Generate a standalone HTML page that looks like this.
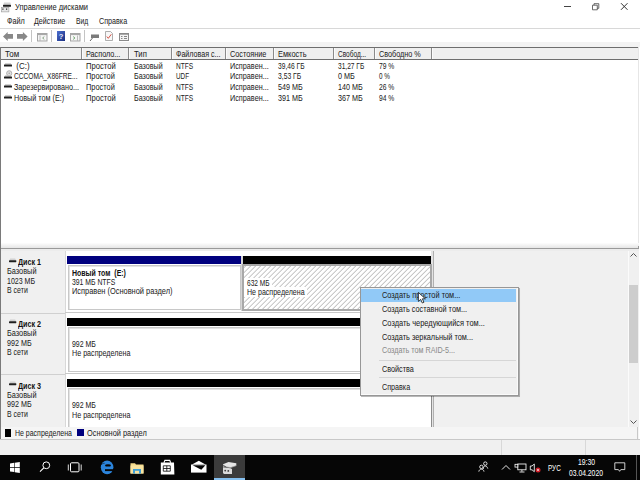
<!DOCTYPE html>
<html><head><meta charset="utf-8">
<style>
*{margin:0;padding:0;box-sizing:border-box}
html,body{width:640px;height:480px;overflow:hidden;background:#fff;font-family:"Liberation Sans",sans-serif;color:#1e1e1e;position:relative}
.a{position:absolute}
.t{position:absolute;white-space:pre;font-size:7.5px;line-height:10px;-webkit-text-stroke:0.03px currentColor}
svg{position:absolute;overflow:visible}
</style></head><body>
<svg style="left:0px;top:0px" width="13" height="14" viewBox="0 0 13 14">
<path d="M3.3 4.8L4 2.6H10.3L11 4.8Z" fill="#d4d4d4"/>
<rect x="3" y="4.8" width="8" height="2" rx="0.6" fill="#1e1e1e"/>
<rect x="1.3" y="7.3" width="7.6" height="4.6" fill="#e6e6e6" stroke="#9a9a9a" stroke-width="0.6"/>
<rect x="2.3" y="8.5" width="1.2" height="1.3" fill="#333"/><rect x="6" y="8.5" width="1.2" height="1.3" fill="#333"/>
</svg>
<div class="t" style="left:14.5px;top:2.0px;font-size:8.3px;color:#222222;transform:scaleX(0.903);transform-origin:0px 0;">Управление дисками</div>
<div class="a" style="left:564px;top:6px;width:7px;height:1px;background:#444;"></div>
<svg style="left:592px;top:3px" width="8" height="7"><path d="M0.5 2.2h4.8v4.6h-4.8z M2 2.2V0.7h4.8v4.6H5.3" fill="none" stroke="#444" stroke-width="0.8"/></svg>
<svg style="left:620px;top:2px" width="9" height="9"><path d="M1 1.2L7.5 7.8M7.5 1.2L1 7.8" stroke="#333" stroke-width="1"/></svg>
<div class="t" style="left:6.5px;top:16.0px;font-size:8.3px;color:#222222;transform:scaleX(0.875);transform-origin:0px 0;">Файл</div>
<div class="t" style="left:34.2px;top:16.0px;font-size:8.3px;color:#222222;transform:scaleX(0.859);transform-origin:0px 0;">Действие</div>
<div class="t" style="left:76px;top:16.0px;font-size:8.3px;color:#222222;transform:scaleX(0.812);transform-origin:0px 0;">Вид</div>
<div class="t" style="left:99px;top:16.0px;font-size:8.3px;color:#222222;transform:scaleX(0.864);transform-origin:0px 0;">Справка</div>
<div class="a" style="left:0px;top:28px;width:640px;height:1px;background:#d8d8d8;"></div>
<div class="a" style="left:0px;top:42px;width:640px;height:5px;background:#f3f3f3;"></div>
<svg style="left:3px;top:32px" width="11" height="10"><path d="M0 4.5L4.7 0V1.9H10V6.8H4.7V9Z" fill="#888"/></svg>
<svg style="left:17px;top:32px" width="11" height="10"><path d="M10.6 4.5L5.9 0V1.9H0V6.8H5.9V9Z" fill="#888"/></svg>
<div class="a" style="left:31px;top:30px;width:1px;height:12px;background:#c4c4c4;"></div>
<svg style="left:37px;top:33px" width="11" height="9"><rect x="0.5" y="0.5" width="9.5" height="7.5" fill="#f6f6f6" stroke="#a4a4a4"/><rect x="0.5" y="0.5" width="9.5" height="1.6" fill="#a8a8a8"/><path d="M3 2.5v5.5" stroke="#b4b4b4" stroke-width="0.9"/><path d="M7.3 3.6L5.6 5L7.3 6.4" fill="none" stroke="#7a9a7a" stroke-width="0.9"/></svg>
<div class="a" style="left:51px;top:30px;width:1px;height:12px;background:#c4c4c4;"></div>
<svg style="left:57px;top:31px" width="8" height="10"><defs><linearGradient id="hg" x1="0" y1="0" x2="1" y2="1"><stop offset="0" stop-color="#4d6fd0"/><stop offset="1" stop-color="#1a2f80"/></linearGradient></defs><rect x="0" y="0" width="8" height="10" fill="url(#hg)"/><text x="4" y="7.6" font-size="7.5" font-family="Liberation Sans" font-weight="bold" fill="#e8eeff" text-anchor="middle">?</text></svg>
<svg style="left:70px;top:33px" width="11" height="9"><rect x="0.5" y="0.5" width="9.5" height="7.5" fill="#f6f6f6" stroke="#a4a4a4"/><rect x="0.5" y="0.5" width="9.5" height="1.6" fill="#a8a8a8"/><path d="M7.5 2.5v5.5" stroke="#b4b4b4" stroke-width="0.9"/><path d="M3.2 3.6L4.9 5L3.2 6.4" fill="none" stroke="#5a9a5a" stroke-width="0.9"/></svg>
<div class="a" style="left:84px;top:30px;width:1px;height:12px;background:#c4c4c4;"></div>
<svg style="left:89px;top:33px" width="11" height="9"><rect x="2" y="1" width="8" height="4" fill="#7a7a7a"/><rect x="2" y="1" width="8" height="1" fill="#bbb"/><path d="M3.5 5L1 8" stroke="#666" stroke-width="1"/></svg>
<svg style="left:105px;top:31px" width="8" height="10"><path d="M0.5 0.5h5l2 2v7h-7z" fill="#f8f8f8" stroke="#9a9a9a" stroke-width="0.8"/><path d="M1.8 5.5l1.5 1.8 3-4" fill="none" stroke="#d04030" stroke-width="0.9"/></svg>
<svg style="left:119px;top:33px" width="10" height="8"><rect x="0.5" y="0.5" width="9" height="7" fill="#f4f4f4" stroke="#8a8a8a"/><rect x="0.5" y="0.5" width="9" height="1.2" fill="#8a8a8a"/><path d="M2 3.5h1.5M2 5.5h1.5M5 3.5h3M5 5.5h3" stroke="#6a6a6a" stroke-width="0.8"/></svg>
<div class="a" style="left:0;top:47px;width:639px;height:13px;background:#efefef;border-top:1px solid #6e6e6e;border-bottom:1px solid #6e6e6e"></div>
<div class="a" style="left:81px;top:48px;width:1px;height:11px;background:#8a8a8a;"></div>
<div class="a" style="left:82px;top:48px;width:1px;height:11px;background:#fbfbfb;"></div>
<div class="a" style="left:128px;top:48px;width:1px;height:11px;background:#8a8a8a;"></div>
<div class="a" style="left:129px;top:48px;width:1px;height:11px;background:#fbfbfb;"></div>
<div class="a" style="left:171px;top:48px;width:1px;height:11px;background:#8a8a8a;"></div>
<div class="a" style="left:172px;top:48px;width:1px;height:11px;background:#fbfbfb;"></div>
<div class="a" style="left:225px;top:48px;width:1px;height:11px;background:#8a8a8a;"></div>
<div class="a" style="left:226px;top:48px;width:1px;height:11px;background:#fbfbfb;"></div>
<div class="a" style="left:273px;top:48px;width:1px;height:11px;background:#8a8a8a;"></div>
<div class="a" style="left:274px;top:48px;width:1px;height:11px;background:#fbfbfb;"></div>
<div class="a" style="left:333px;top:48px;width:1px;height:11px;background:#8a8a8a;"></div>
<div class="a" style="left:334px;top:48px;width:1px;height:11px;background:#fbfbfb;"></div>
<div class="a" style="left:374px;top:48px;width:1px;height:11px;background:#8a8a8a;"></div>
<div class="a" style="left:375px;top:48px;width:1px;height:11px;background:#fbfbfb;"></div>
<div class="a" style="left:431px;top:48px;width:1px;height:11px;background:#8a8a8a;"></div>
<div class="a" style="left:432px;top:48px;width:1px;height:11px;background:#fbfbfb;"></div>
<div class="t" style="left:5px;top:49.3px;font-size:8.3px;color:#222222;transform:scaleX(0.960);transform-origin:0px 0;">Том</div>
<div class="t" style="left:86px;top:49.3px;font-size:8.3px;color:#222222;transform:scaleX(0.872);transform-origin:0px 0;">Располо...</div>
<div class="t" style="left:134px;top:49.3px;font-size:8.3px;color:#222222;transform:scaleX(0.929);transform-origin:0px 0;">Тип</div>
<div class="t" style="left:176px;top:49.3px;font-size:8.3px;color:#222222;transform:scaleX(0.856);transform-origin:0px 0;">Файловая с...</div>
<div class="t" style="left:230px;top:49.3px;font-size:8.3px;color:#222222;transform:scaleX(0.878);transform-origin:0px 0;">Состояние</div>
<div class="t" style="left:277.5px;top:49.3px;font-size:8.3px;color:#222222;transform:scaleX(0.897);transform-origin:0px 0;">Емкость</div>
<div class="t" style="left:337.7px;top:49.3px;font-size:8.3px;color:#222222;transform:scaleX(0.785);transform-origin:0px 0;">Свобод...</div>
<div class="t" style="left:379px;top:49.3px;font-size:8.3px;color:#222222;transform:scaleX(0.873);transform-origin:0px 0;">Свободно %</div>
<div class="a" style="left:638px;top:47px;width:1px;height:201px;background:#e6e6e6;"></div>
<div class="a" style="left:0px;top:47px;width:1px;height:392px;background:#7a7a7a;"></div>
<svg style="left:4px;top:63.0px" width="9" height="5"><path d="M0.5 1.6L1.2 0.3H6.8L7.5 1.6Z" fill="#c4c4c4"/><rect x="0" y="1.6" width="8" height="2" rx="0.4" fill="#1e1e1e"/></svg>
<div class="t" style="left:14px;top:60.7px;font-size:8.3px;color:#222222;transform:scaleX(0.964);transform-origin:0px 0;"> (C:)</div>
<div class="t" style="left:86px;top:60.7px;font-size:8.3px;color:#222222;transform:scaleX(0.919);transform-origin:0px 0;">Простой</div>
<div class="t" style="left:133.6px;top:60.7px;font-size:8.3px;color:#222222;transform:scaleX(0.861);transform-origin:0px 0;">Базовый</div>
<div class="t" style="left:176px;top:60.7px;font-size:8.3px;color:#222222;transform:scaleX(0.795);transform-origin:0px 0;">NTFS</div>
<div class="t" style="left:230px;top:60.7px;font-size:8.3px;color:#222222;transform:scaleX(0.875);transform-origin:0px 0;">Исправен...</div>
<div class="t" style="left:277.7px;top:60.7px;font-size:8.3px;color:#222222;transform:scaleX(0.803);transform-origin:0px 0;">39,46 ГБ</div>
<div class="t" style="left:337.7px;top:60.7px;font-size:8.3px;color:#222222;transform:scaleX(0.794);transform-origin:0px 0;">31,27 ГБ</div>
<div class="t" style="left:379.2px;top:60.7px;font-size:8.3px;color:#222222;transform:scaleX(0.811);transform-origin:0px 0;">79 %</div>
<svg style="left:4px;top:69.05000000000001px" width="10" height="11"><circle cx="5.2" cy="4.3" r="2.6" fill="#e0e0e0" stroke="#9a9a9a" stroke-width="0.7"/><circle cx="5.2" cy="4.3" r="0.7" fill="#9a9a9a"/><path d="M0.5 7.6L1.2 6.3H6.8L7.5 7.6Z" fill="#c4c4c4"/><rect x="0" y="7.6" width="8" height="2" rx="0.4" fill="#1e1e1e"/></svg>
<div class="t" style="left:14px;top:71.35000000000001px;font-size:8.3px;color:#222222;transform:scaleX(0.796);transform-origin:0px 0;">CCCOMA_X86FRE...</div>
<div class="t" style="left:86px;top:71.35000000000001px;font-size:8.3px;color:#222222;transform:scaleX(0.891);transform-origin:0px 0;">Простой</div>
<div class="t" style="left:133.6px;top:71.35000000000001px;font-size:8.3px;color:#222222;transform:scaleX(0.861);transform-origin:0px 0;">Базовый</div>
<div class="t" style="left:176px;top:71.35000000000001px;font-size:8.3px;color:#222222;transform:scaleX(0.765);transform-origin:0px 0;">UDF</div>
<div class="t" style="left:230px;top:71.35000000000001px;font-size:8.3px;color:#222222;transform:scaleX(0.875);transform-origin:0px 0;">Исправен...</div>
<div class="t" style="left:277.7px;top:71.35000000000001px;font-size:8.3px;color:#222222;transform:scaleX(0.814);transform-origin:0px 0;">3,53 ГБ</div>
<div class="t" style="left:337.7px;top:71.35000000000001px;font-size:8.3px;color:#222222;transform:scaleX(0.874);transform-origin:0px 0;">0 МБ</div>
<div class="t" style="left:379.2px;top:71.35000000000001px;font-size:8.3px;color:#222222;transform:scaleX(0.767);transform-origin:0px 0;">0 %</div>
<svg style="left:4px;top:84.3px" width="9" height="5"><path d="M0.5 1.6L1.2 0.3H6.8L7.5 1.6Z" fill="#c4c4c4"/><rect x="0" y="1.6" width="8" height="2" rx="0.4" fill="#1e1e1e"/></svg>
<div class="t" style="left:14px;top:82.0px;font-size:8.3px;color:#222222;transform:scaleX(0.867);transform-origin:0px 0;">Зарезервировано...</div>
<div class="t" style="left:86px;top:82.0px;font-size:8.3px;color:#222222;transform:scaleX(0.891);transform-origin:0px 0;">Простой</div>
<div class="t" style="left:133.6px;top:82.0px;font-size:8.3px;color:#222222;transform:scaleX(0.861);transform-origin:0px 0;">Базовый</div>
<div class="t" style="left:176px;top:82.0px;font-size:8.3px;color:#222222;transform:scaleX(0.795);transform-origin:0px 0;">NTFS</div>
<div class="t" style="left:230px;top:82.0px;font-size:8.3px;color:#222222;transform:scaleX(0.875);transform-origin:0px 0;">Исправен...</div>
<div class="t" style="left:277.7px;top:82.0px;font-size:8.3px;color:#222222;transform:scaleX(0.864);transform-origin:0px 0;">549 МБ</div>
<div class="t" style="left:337.7px;top:82.0px;font-size:8.3px;color:#222222;transform:scaleX(0.868);transform-origin:0px 0;">140 МБ</div>
<div class="t" style="left:379.2px;top:82.0px;font-size:8.3px;color:#222222;transform:scaleX(0.811);transform-origin:0px 0;">26 %</div>
<svg style="left:4px;top:94.95px" width="9" height="5"><path d="M0.5 1.6L1.2 0.3H6.8L7.5 1.6Z" fill="#c4c4c4"/><rect x="0" y="1.6" width="8" height="2" rx="0.4" fill="#1e1e1e"/></svg>
<div class="t" style="left:14px;top:92.65px;font-size:8.3px;color:#222222;transform:scaleX(0.872);transform-origin:0px 0;">Новый том (E:)</div>
<div class="t" style="left:86px;top:92.65px;font-size:8.3px;color:#222222;transform:scaleX(0.919);transform-origin:0px 0;">Простой</div>
<div class="t" style="left:133.6px;top:92.65px;font-size:8.3px;color:#222222;transform:scaleX(0.861);transform-origin:0px 0;">Базовый</div>
<div class="t" style="left:176px;top:92.65px;font-size:8.3px;color:#222222;transform:scaleX(0.795);transform-origin:0px 0;">NTFS</div>
<div class="t" style="left:230px;top:92.65px;font-size:8.3px;color:#222222;transform:scaleX(0.875);transform-origin:0px 0;">Исправен...</div>
<div class="t" style="left:277.7px;top:92.65px;font-size:8.3px;color:#222222;transform:scaleX(0.864);transform-origin:0px 0;">391 МБ</div>
<div class="t" style="left:337.7px;top:92.65px;font-size:8.3px;color:#222222;transform:scaleX(0.868);transform-origin:0px 0;">367 МБ</div>
<div class="t" style="left:379.2px;top:92.65px;font-size:8.3px;color:#222222;transform:scaleX(0.811);transform-origin:0px 0;">94 %</div>
<div class="a" style="left:1px;top:243px;width:638px;height:5px;background:linear-gradient(#fdfdfd,#e6e6e6)"></div>
<div class="a" style="left:1px;top:248px;width:638px;height:3px;background:#ececec;"></div>
<div class="a" style="left:1px;top:248px;width:638px;height:1px;background:#9a9a9a;"></div>
<div class="a" style="left:638px;top:246px;width:1px;height:3px;background:#9a9a9a;"></div>
<div class="a" style="left:1px;top:251px;width:638px;height:176px;background:#f0f0f0;"></div>
<div class="a" style="left:66px;top:251px;width:368px;height:176px;background:#ffffff;"></div>
<div class="a" style="left:65px;top:251px;width:1px;height:176px;background:#d8d8d8;"></div>
<div class="a" style="left:431px;top:251px;width:3px;height:176px;background:#e4e4e4;"></div>
<div class="a" style="left:433px;top:251px;width:1px;height:176px;background:#b0b0b0;"></div>
<div class="a" style="left:628px;top:251px;width:11px;height:176px;background:#f0f0f0;"></div>
<div class="a" style="left:627.5px;top:251px;width:1px;height:176px;background:#fbfbfb;"></div>
<svg style="left:629px;top:252px" width="9" height="6"><path d="M1.5 4.5L4.5 1.5L7.5 4.5" fill="none" stroke="#555" stroke-width="1"/></svg>
<svg style="left:629px;top:419px" width="9" height="6"><path d="M1.5 1.5L4.5 4.5L7.5 1.5" fill="none" stroke="#555" stroke-width="1"/></svg>
<div class="a" style="left:629px;top:285px;width:9px;height:78px;background:#cdcdcd;"></div>
<svg style="left:8.7px;top:257.5px" width="8" height="5"><path d="M0.4 2.3L1.2 0.6H6.2L7 2.3Z" fill="#d0d0d0"/><rect x="0" y="2.3" width="7.3" height="1.9" rx="0.4" fill="#1e1e1e"/></svg>
<div class="t" style="left:17.8px;top:257.2px;font-size:8.5px;color:#111;font-weight:bold;-webkit-text-stroke:0;transform:scaleX(0.841);transform-origin:0px 0;">Диск 1</div>
<div class="t" style="left:7px;top:266.4px;font-size:8.3px;color:#222222;transform:scaleX(0.886);transform-origin:0px 0;">Базовый</div>
<div class="t" style="left:7px;top:275.8px;font-size:8.3px;color:#222222;transform:scaleX(0.848);transform-origin:0px 0;">1023 МБ</div>
<div class="t" style="left:7px;top:285.1px;font-size:8.3px;color:#222222;transform:scaleX(0.840);transform-origin:0px 0;">В сети</div>
<div class="a" style="left:1px;top:312.7px;width:64px;height:1px;background:#d0d0d0;"></div>
<div class="a" style="left:65px;top:311.7px;width:369px;height:1px;background:#c8c8c8;"></div>
<svg style="left:8.7px;top:319.2px" width="8" height="5"><path d="M0.4 2.3L1.2 0.6H6.2L7 2.3Z" fill="#d0d0d0"/><rect x="0" y="2.3" width="7.3" height="1.9" rx="0.4" fill="#1e1e1e"/></svg>
<div class="t" style="left:17.8px;top:318.9px;font-size:8.5px;color:#111;font-weight:bold;-webkit-text-stroke:0;transform:scaleX(0.841);transform-origin:0px 0;">Диск 2</div>
<div class="t" style="left:7px;top:328.09999999999997px;font-size:8.3px;color:#222222;transform:scaleX(0.886);transform-origin:0px 0;">Базовый</div>
<div class="t" style="left:7px;top:337.5px;font-size:8.3px;color:#222222;transform:scaleX(0.862);transform-origin:0px 0;">992 МБ</div>
<div class="t" style="left:7px;top:346.8px;font-size:8.3px;color:#222222;transform:scaleX(0.840);transform-origin:0px 0;">В сети</div>
<div class="a" style="left:1px;top:374.4px;width:64px;height:1px;background:#d0d0d0;"></div>
<div class="a" style="left:65px;top:373.4px;width:369px;height:1px;background:#c8c8c8;"></div>
<svg style="left:8.7px;top:380.9px" width="8" height="5"><path d="M0.4 2.3L1.2 0.6H6.2L7 2.3Z" fill="#d0d0d0"/><rect x="0" y="2.3" width="7.3" height="1.9" rx="0.4" fill="#1e1e1e"/></svg>
<div class="t" style="left:17.8px;top:380.59999999999997px;font-size:8.5px;color:#111;font-weight:bold;-webkit-text-stroke:0;transform:scaleX(0.841);transform-origin:0px 0;">Диск 3</div>
<div class="t" style="left:7px;top:389.79999999999995px;font-size:8.3px;color:#222222;transform:scaleX(0.886);transform-origin:0px 0;">Базовый</div>
<div class="t" style="left:7px;top:399.2px;font-size:8.3px;color:#222222;transform:scaleX(0.862);transform-origin:0px 0;">992 МБ</div>
<div class="t" style="left:7px;top:408.5px;font-size:8.3px;color:#222222;transform:scaleX(0.840);transform-origin:0px 0;">В сети</div>
<div class="a" style="left:67px;top:256px;width:174px;height:8px;background:#00007e;"></div>
<div class="a" style="left:68px;top:265px;width:173px;height:45px;background:#fff;border:1px solid #c8c8c8;box-shadow:inset 1px 1px 0 #e4e4e4"></div>
<div class="a" style="left:241px;top:256px;width:2px;height:55px;background:#d6d6d6;"></div>
<div class="t" style="left:71.8px;top:267.8px;font-size:8.5px;color:#111;font-weight:bold;-webkit-text-stroke:0;transform:scaleX(0.821);transform-origin:0px 0;">Новый том  (E:)</div>
<div class="t" style="left:71.8px;top:277px;font-size:8.3px;color:#222222;transform:scaleX(0.825);transform-origin:0px 0;">391 МБ NTFS</div>
<div class="t" style="left:71.8px;top:286.4px;font-size:8.3px;color:#222222;transform:scaleX(0.895);transform-origin:0px 0;">Исправен (Основной раздел)</div>
<div class="a" style="left:243px;top:256px;width:188px;height:8px;background:#000;"></div>
<svg style="left:242px;top:264px" width="190" height="47">
<defs><pattern id="hp" patternUnits="userSpaceOnUse" width="3.54" height="3.54" patternTransform="rotate(45)"><rect width="3.54" height="3.54" fill="#fff"/><rect x="0" y="0" width="0.75" height="3.54" fill="#b4b4b4"/></pattern></defs>
<rect x="1" y="1" width="188" height="45" fill="url(#hp)" stroke="#a8a8a8" stroke-width="2"/>
</svg>
<div class="a" style="left:244px;top:277.5px;width:28px;height:9.5px;background:#fff;"></div>
<div class="a" style="left:244px;top:287px;width:63px;height:9.5px;background:#fff;"></div>
<div class="t" style="left:246.9px;top:277.5px;font-size:8.3px;color:#222222;transform:scaleX(0.790);transform-origin:0px 0;">632 МБ</div>
<div class="t" style="left:246.9px;top:286.9px;font-size:8.3px;color:#222222;transform:scaleX(0.851);transform-origin:0px 0;">Не распределена</div>
<div class="a" style="left:67px;top:317.7px;width:364px;height:8px;background:#000;"></div>
<div class="a" style="left:68px;top:326.7px;width:364px;height:45px;background:#fff;border:1px solid #c8c8c8;border-right-color:#8c8c8c;box-shadow:inset 1px 1px 0 #e4e4e4"></div>
<div class="t" style="left:71.5px;top:338.5px;font-size:8.3px;color:#222222;transform:scaleX(0.839);transform-origin:0px 0;">992 МБ</div>
<div class="t" style="left:71.5px;top:347.9px;font-size:8.3px;color:#222222;transform:scaleX(0.863);transform-origin:0px 0;">Не распределена</div>
<div class="a" style="left:67px;top:379.4px;width:364px;height:8px;background:#000;"></div>
<div class="a" style="left:68px;top:388.4px;width:364px;height:45px;background:#fff;border:1px solid #c8c8c8;border-right-color:#8c8c8c;box-shadow:inset 1px 1px 0 #e4e4e4"></div>
<div class="t" style="left:71.5px;top:400.2px;font-size:8.3px;color:#222222;transform:scaleX(0.839);transform-origin:0px 0;">992 МБ</div>
<div class="t" style="left:71.5px;top:409.59999999999997px;font-size:8.3px;color:#222222;transform:scaleX(0.863);transform-origin:0px 0;">Не распределена</div>
<div class="a" style="left:1px;top:427px;width:638px;height:12px;background:#f5f5f5;"></div>
<div class="a" style="left:637px;top:427px;width:1px;height:12px;background:#c8c8c8;"></div>
<div class="a" style="left:5px;top:429px;width:6px;height:8px;background:#000;"></div>
<div class="t" style="left:15px;top:428.3px;font-size:8.3px;color:#222222;transform:scaleX(0.841);transform-origin:0px 0;">Не распределена</div>
<div class="a" style="left:77px;top:429px;width:7px;height:7px;background:#00007e;"></div>
<div class="t" style="left:87px;top:428.3px;font-size:8.3px;color:#222222;transform:scaleX(0.891);transform-origin:0px 0;">Основной раздел</div>
<div class="a" style="left:0px;top:438.5px;width:640px;height:1px;background:#c8c8c8;"></div>
<div class="a" style="left:0px;top:439.5px;width:640px;height:15.5px;background:#f0f0f0;"></div>
<div class="a" style="left:501px;top:440px;width:1px;height:15px;background:#d8d8d8;"></div>
<div class="a" style="left:585px;top:440px;width:1px;height:15px;background:#d8d8d8;"></div>
<div class="a" style="left:360px;top:287px;width:158.5px;height:108.5px;background:#f0f0f0;border:1px solid #979797;box-shadow:1px 1px 0.5px rgba(0,0,0,0.28),inset -1px -1px 0 #fafafa"></div>
<div class="a" style="left:361px;top:289px;width:155px;height:13px;background:#91c9f7;"></div>
<div class="t" style="left:381.5px;top:290.3px;font-size:8.3px;color:#222222;transform:scaleX(0.891);transform-origin:0px 0;">Создать простой том...</div>
<div class="t" style="left:381.5px;top:304.2px;font-size:8.3px;color:#222222;transform:scaleX(0.880);transform-origin:0px 0;">Создать составной том...</div>
<div class="t" style="left:381.5px;top:318.0px;font-size:8.3px;color:#222222;transform:scaleX(0.894);transform-origin:0px 0;">Создать чередующийся том...</div>
<div class="t" style="left:381.5px;top:331.7px;font-size:8.3px;color:#222222;transform:scaleX(0.885);transform-origin:0px 0;">Создать зеркальный том...</div>
<div class="t" style="left:381.5px;top:345.2px;font-size:8.3px;color:#8a8a8a;transform:scaleX(0.866);transform-origin:0px 0;">Создать том RAID-5...</div>
<div class="t" style="left:381.5px;top:363.6px;font-size:8.3px;color:#222222;transform:scaleX(0.872);transform-origin:0px 0;">Свойства</div>
<div class="t" style="left:381.5px;top:381.8px;font-size:8.3px;color:#222222;transform:scaleX(0.864);transform-origin:0px 0;">Справка</div>
<div class="a" style="left:379px;top:359.5px;width:137px;height:1px;background:#d6d6d6;"></div>
<div class="a" style="left:379px;top:377px;width:137px;height:1px;background:#d6d6d6;"></div>
<svg style="left:418px;top:292px" width="10" height="13"><path d="M0.4 0.4V9.4L2.7 7.4L4.3 11L5.9 10.3L4.4 6.8H7.4Z" fill="#fff" stroke="#111" stroke-width="0.8" stroke-linejoin="round"/></svg>
<div class="a" style="left:0px;top:455px;width:640px;height:25px;background:#060606;"></div>
<svg style="left:10px;top:462px" width="11" height="12"><path d="M0 1.4L4.2 0.8V5.1H0Z M4.8 0.7L9.8 0V5.1H4.8Z M0 5.7H4.2V10L0 9.4Z M4.8 5.7H9.8V11L4.8 10.2Z" fill="#fff"/></svg>
<svg style="left:39px;top:461px" width="12" height="12"><circle cx="7.3" cy="4.3" r="3.4" fill="none" stroke="#fff" stroke-width="1"/><path d="M4.8 6.8L1 10.6" stroke="#fff" stroke-width="1.1"/></svg>
<svg style="left:67px;top:462px" width="16" height="11"><rect x="3.5" y="0.8" width="8.5" height="9" rx="1" fill="none" stroke="#fff" stroke-width="1"/><path d="M1.3 2.5v6M14.2 2.5v6" stroke="#ddd" stroke-width="1"/></svg>
<svg style="left:100px;top:460px" width="14" height="15"><ellipse cx="7.1" cy="7.3" rx="6.3" ry="6.9" fill="#2b84dc"/><ellipse cx="8" cy="5.4" rx="3" ry="1.2" fill="#060606"/><rect x="5" y="9.2" width="9.5" height="1.9" fill="#060606"/><path d="M0.8 5.2C1.8 3.8 3.2 3.2 4.6 3.3" fill="none" stroke="#060606" stroke-width="0.6"/></svg>
<svg style="left:130px;top:462px" width="14" height="12"><path d="M0.5 1.2H5L6 2.4H13.5V11.5H0.5Z" fill="#f3d98a"/><path d="M0.5 3.5H13.5V11.5H0.5Z" fill="#f8e3a0"/><rect x="3" y="7" width="8" height="4.5" fill="#3e9fd8"/><rect x="5" y="8.8" width="4" height="2.7" fill="#f8e3a0"/></svg>
<svg style="left:160px;top:459px" width="16" height="17"><path d="M3.9 3.8L4.9 1.4H9.7L10.7 3.8" fill="none" stroke="#fff" stroke-width="1.1"/><path d="M0.8 3.6H14L14.4 15.4H0.8Z" fill="#fff"/><path d="M3.3 6.8H10.3V12.2H3.3Z M6.8 6.8V12.2 M3.3 9.5H10.3" fill="none" stroke="#060606" stroke-width="0.8"/></svg>
<svg style="left:190px;top:460px" width="18" height="14"><path d="M1 4.5H16.5V12.6H1Z" fill="#fff"/><path d="M2 4.5L8.8 0.8L15.5 4.5Z" fill="#fff"/><path d="M2.6 5.2H15.4L11.3 9.8Z" fill="#060606"/></svg>
<div class="a" style="left:214px;top:455px;width:31px;height:25px;background:#3b3b3b;"></div>
<div class="a" style="left:214px;top:478.2px;width:31px;height:1.8px;background:#86c0ef;"></div>
<svg style="left:222px;top:461px" width="17" height="14"><path d="M1 3.3L6.5 1L14.3 2.2V4.6L8.5 6.6L1 5.3Z" fill="#e6e6e6"/><path d="M1 5.3L8.5 6.6L14.3 4.6" fill="none" stroke="#b0b0b0" stroke-width="0.7"/><path d="M1.2 4.2L4.5 6.5" stroke="#3a3a3a" stroke-width="0.9"/><path d="M1 6.3L8.5 7.2L10 8V13H2L1 12Z" fill="#dadada"/><circle cx="3.2" cy="9.6" r="0.9" fill="#3a3a3a"/><circle cx="6.3" cy="9.9" r="0.9" fill="#3a3a3a"/></svg>
<svg style="left:478px;top:461px" width="12" height="12"><circle cx="7.3" cy="2.6" r="1.7" fill="none" stroke="#fff" stroke-width="0.85"/><path d="M5.2 8C5.4 6 6.2 5 7.3 5S9.3 6 9.8 7.6" fill="none" stroke="#fff" stroke-width="0.85"/><circle cx="3.4" cy="5.9" r="1.7" fill="none" stroke="#fff" stroke-width="0.85"/><path d="M0.8 10.6C1 9.2 2 8.2 3.4 8.2S5.8 9.2 6 10.6" fill="none" stroke="#fff" stroke-width="0.85"/></svg>
<svg style="left:501px;top:464px" width="10" height="7"><path d="M1 5.5L5 1.5L9 5.5" fill="none" stroke="#fff" stroke-width="0.9"/></svg>
<svg style="left:514px;top:463px" width="13" height="10"><rect x="3.8" y="1" width="8.2" height="5.8" fill="none" stroke="#fff" stroke-width="0.85"/><path d="M7.9 6.8v1.8M5.5 9h5" stroke="#fff" stroke-width="0.85"/><rect x="1" y="1.3" width="2.8" height="2.8" fill="#060606" stroke="#fff" stroke-width="0.8"/></svg>
<svg style="left:529px;top:463px" width="13" height="11"><path d="M1.3 3H3L5.3 1V8.7L3 6.8H1.3Z" fill="none" stroke="#fff" stroke-width="0.85"/><circle cx="9" cy="7" r="2.5" fill="#d0202a"/><path d="M8 6L10 8M10 6L8 8" stroke="#fff" stroke-width="0.6"/></svg>
<div class="t" style="left:548px;top:462.5px;font-size:8.3px;color:#fff;transform:scaleX(0.765);transform-origin:0px 0;">РУС</div>
<div class="t" style="left:577.5px;top:457.2px;font-size:8.3px;color:#fff;transform:scaleX(0.819);transform-origin:0px 0;">19:30</div>
<div class="t" style="left:569px;top:467.8px;font-size:8.3px;color:#fff;transform:scaleX(0.817);transform-origin:0px 0;">03.04.2020</div>
<svg style="left:614px;top:462px" width="12" height="11"><path d="M0.8 0.8h10v6.8H6.8L5.6 9.3L4.4 7.6H0.8Z" fill="none" stroke="#f0f0f0" stroke-width="0.85"/></svg>
<div class="a" style="left:636px;top:455px;width:1px;height:25px;background:#555;"></div>
</body></html>
